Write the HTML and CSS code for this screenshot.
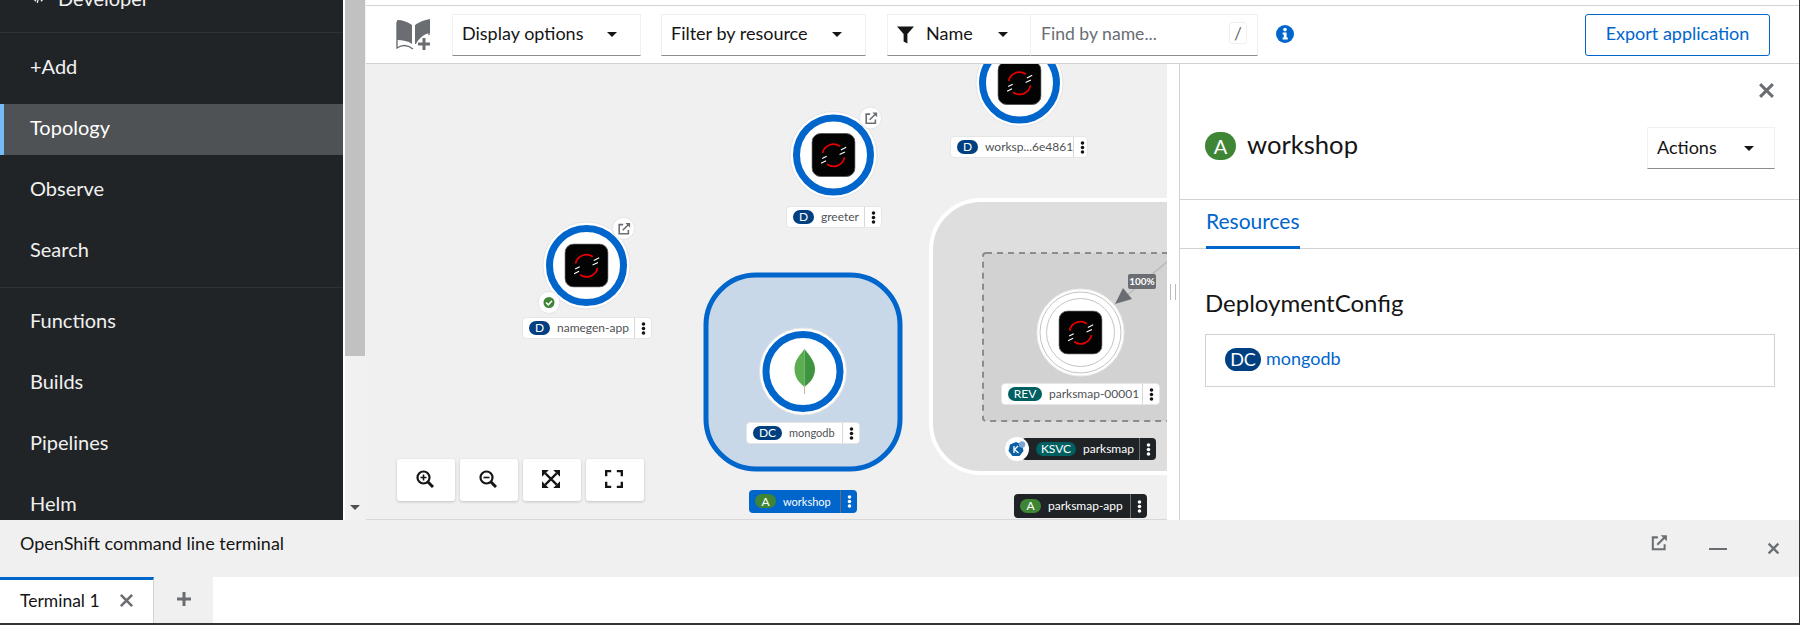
FILE: index.html
```html
<!DOCTYPE html>
<html lang="en">
<head>
    <meta charset="UTF-8">
    <title>Topology</title>
    <link rel="stylesheet" href="styles.css">
</head>
<body>
    <!-- shared icons -->
    <svg class="icon-defs" width="0" height="0">
        <defs>
            <symbol id="shift-logo" viewBox="0 0 45 45">
                <rect x="0.5" y="0.5" width="44" height="44" rx="9" fill="#030303" stroke="#55585b"/>
                <path d="M29 13.5 A11.4 11.4 0 0 0 11.3 20.5" fill="none" stroke="#e60000" stroke-width="1.8"/>
                <path d="M16 32 A11.4 11.4 0 0 0 33.8 25" fill="none" stroke="#e60000" stroke-width="1.8"/>
                <path d="M30 17.4 L35.5 14.6 M28.7 22 L34.2 19.4 M10.9 26 L15.6 23.7 M9.8 31 L14.9 28.4" stroke="#fff" stroke-width="1.1"/>
            </symbol>
            <symbol id="ext-link" viewBox="0 0 16 16">
                <path d="M7 3 H2.5 V13.5 H13 V9" fill="none" stroke="currentColor" stroke-width="1.8"/>
                <path d="M6.5 9.5 L13.5 2.5" stroke="currentColor" stroke-width="1.8"/>
                <path d="M9.5 1 H15 V6.5 Z" fill="currentColor"/>
            </symbol>
            <symbol id="kebab" viewBox="0 0 6 16">
                <circle cx="3" cy="2.5" r="2.2"/>
                <circle cx="3" cy="8" r="2.2"/>
                <circle cx="3" cy="13.5" r="2.2"/>
            </symbol>
            <symbol id="close-x" viewBox="0 0 16 16">
                <path d="M2 2 L14 14 M14 2 L2 14" stroke="currentColor" stroke-width="2.8" fill="none"/>
            </symbol>
        </defs>
    </svg>

    <div class="app">
        <div class="page">
            <nav class="sidebar">
                <div class="perspective">
                    <svg class="perspective-icon" viewBox="0 0 16 12"><path d="M5 2 L1 6 L5 10 M11 2 L15 6 L11 10 M9.5 0 L6.5 12" fill="none" stroke="#f0f0f0" stroke-width="1.6"/></svg>
                    <span>Developer</span>
                </div>
                <div class="nav-group">
                    <a class="nav-item">+Add</a>
                    <a class="nav-item active">Topology</a>
                    <a class="nav-item">Observe</a>
                    <a class="nav-item">Search</a>
                </div>
                <div class="nav-group second">
                    <a class="nav-item">Functions</a>
                    <a class="nav-item">Builds</a>
                    <a class="nav-item">Pipelines</a>
                    <a class="nav-item">Helm</a>
                </div>
            </nav>
            <div class="scroll-track">
                <div class="scroll-thumb"></div>
                <div class="scroll-arrow"></div>
            </div>

            <main class="main">
                <div class="top-strip"></div>
                <div class="toolbar">
                    <svg class="book-icon" viewBox="0 0 36 32">
                        <path d="M1 1 C7 1 12 3 16 6 V25 C12 22 7 21 1 21 Z" fill="#6a6e73"/>
                        <path d="M19 6 C23 3 28 1 34 0 V14 C28 15 23 19 20 25 H19 Z" fill="#6a6e73"/>
                        <path d="M1 3 V29 C7 25 12 26 17 30 M33 2 V16" fill="none" stroke="#6a6e73" stroke-width="1.4"/>
                        <path d="M28 19 V31 M22 25 H34" stroke="#6a6e73" stroke-width="3"/>
                    </svg>
                    <button class="dropdown display-drop"><span>Display options</span><i class="caret"></i></button>
                    <button class="dropdown resource-drop"><span>Filter by resource</span><i class="caret"></i></button>
                    <div class="filter-group">
                        <button class="dropdown name-drop">
                            <svg class="funnel" viewBox="0 0 18 18"><path d="M0 0 H18 L11 8 V18 L7 16 V8 Z" fill="#151515"/></svg>
                            <span class="name-text">Name</span><i class="caret"></i>
                        </button>
                        <div class="find-input">
                            <span>Find by name...</span>
                            <kbd class="slash-hint">/</kbd>
                        </div>
                    </div>
                    <svg class="info-icon" viewBox="0 0 18 18">
                        <circle cx="9" cy="9" r="9" fill="#06c"/>
                        <circle cx="9" cy="4.6" r="1.8" fill="#fff"/>
                        <path d="M6.6 7.4 H10.6 V12.6 H11.8 V14.6 H6.6 V12.6 H7.8 V9.4 H6.6 Z" fill="#fff"/>
                    </svg>
                    <button class="export-btn">Export application</button>
                </div>

                <div class="content">
                    <div class="canvas">
                        <svg class="graph" width="801" height="456" viewBox="366 64 801 456">
                            <!-- groups -->
                            <rect x="706" y="275" width="194" height="194" rx="50" fill="#c9d8e8" stroke="#06c" stroke-width="5"/>
                            <rect x="931" y="200" width="320" height="273" rx="50" fill="#dedede" stroke="#fff" stroke-width="4"/>
                            <rect x="983" y="253" width="250" height="168" rx="3" fill="#d2d2d2" stroke="#8a8d90" stroke-width="2" stroke-dasharray="6 5"/>

                            <!-- traffic edge -->
                            <path d="M1168 261 L1124 298" stroke="#b8bbbe" stroke-width="1.5"/>
                            <path d="M1115 304 L1123 288 L1132 299 Z" fill="#6a6e73"/>

                            <!-- namegen-app -->
                            <circle cx="586.5" cy="265.5" r="43.5" fill="#fff" stroke="#e4e4e4"/>
                            <circle cx="586.5" cy="265.5" r="37" fill="#fff" stroke="#06c" stroke-width="7"/>
                            <use href="#shift-logo" x="564.5" y="243.5" width="44" height="44"/>
                            <circle cx="623.5" cy="228.5" r="11" fill="#fff" stroke="#e4e4e4"/>
                            <use class="deco-icon" href="#ext-link" x="617" y="222" width="14" height="14"/>
                            <circle cx="549" cy="302.5" r="11" fill="#fff" stroke="#e4e4e4"/>
                            <circle cx="549" cy="302.5" r="5.5" fill="#3e8635"/>
                            <path d="M546 302.5 L548.3 304.8 L552 300.8" fill="none" stroke="#fff" stroke-width="1.6"/>

                            <!-- greeter -->
                            <circle cx="833.5" cy="155" r="43.5" fill="#fff" stroke="#e4e4e4"/>
                            <circle cx="833.5" cy="155" r="37" fill="#fff" stroke="#06c" stroke-width="7"/>
                            <use href="#shift-logo" x="811.5" y="133" width="44" height="44"/>
                            <circle cx="870.5" cy="118" r="11" fill="#fff" stroke="#e4e4e4"/>
                            <use class="deco-icon" href="#ext-link" x="864" y="111.5" width="14" height="14"/>

                            <!-- workspace -->
                            <circle cx="1019.5" cy="83" r="43.5" fill="#fff" stroke="#e4e4e4"/>
                            <circle cx="1019.5" cy="83" r="37" fill="#fff" stroke="#06c" stroke-width="7"/>
                            <use href="#shift-logo" x="997.5" y="61" width="44" height="44"/>

                            <!-- mongodb -->
                            <circle cx="803" cy="371.5" r="43.5" fill="#fff" stroke="#e4e4e4"/>
                            <circle cx="803" cy="371.5" r="37" fill="#fff" stroke="#06c" stroke-width="7"/>
                            <path d="M804.5 349 C800 355 794.5 360 794.5 369 C794.5 379 801 384 804.5 387 Z" fill="#5cad4f"/>
                            <path d="M804.5 349 C809 355 815 361 815 369 C815 379 808 384 804.5 387 Z" fill="#3f9440"/>
                            <path d="M804.5 385 V394" stroke="#c5b998" stroke-width="1"/>

                            <!-- parksmap revision -->
                            <circle cx="1080.5" cy="332.5" r="43.5" fill="#fff" stroke="#ededed"/>
                            <circle cx="1080.5" cy="332.5" r="40.5" fill="#fff" stroke="#c4c4c4"/>
                            <circle cx="1080.5" cy="332.5" r="34" fill="#fff" stroke="#c4c4c4"/>
                            <use href="#shift-logo" x="1058.5" y="310.5" width="44" height="44"/>
                        </svg>

                        <span class="traffic-tag">100%</span>

                        <div class="node-label at-namegen">
                            <div class="label-main"><b class="res-badge deploy">D</b><span>namegen-app</span></div>
                            <div class="label-kebab"><svg><use href="#kebab"/></svg></div>
                        </div>
                        <div class="node-label at-greeter">
                            <div class="label-main"><b class="res-badge deploy">D</b><span>greeter</span></div>
                            <div class="label-kebab"><svg><use href="#kebab"/></svg></div>
                        </div>
                        <div class="node-label at-workspace">
                            <div class="label-main"><b class="res-badge deploy">D</b><span>worksp...6e4861</span></div>
                            <div class="label-kebab"><svg><use href="#kebab"/></svg></div>
                        </div>
                        <div class="node-label at-mongodb">
                            <div class="label-main"><b class="res-badge deploy wide">DC</b><span>mongodb</span></div>
                            <div class="label-kebab"><svg><use href="#kebab"/></svg></div>
                        </div>
                        <div class="node-label at-revision">
                            <div class="label-main"><b class="res-badge teal wide">REV</b><span>parksmap-00001</span></div>
                            <div class="label-kebab"><svg><use href="#kebab"/></svg></div>
                        </div>
                        <div class="node-label group-label selected at-workshop">
                            <div class="label-main"><b class="res-badge green">A</b><span>workshop</span></div>
                            <div class="label-kebab"><svg><use href="#kebab"/></svg></div>
                        </div>
                        <div class="node-label group-label dark at-ksvc">
                            <div class="label-main"><b class="res-badge teal wide">KSVC</b><span>parksmap</span></div>
                            <div class="label-kebab"><svg><use href="#kebab"/></svg></div>
                        </div>
                        <div class="node-label group-label dark at-parksapp">
                            <div class="label-main"><b class="res-badge green">A</b><span>parksmap-app</span></div>
                            <div class="label-kebab"><svg><use href="#kebab"/></svg></div>
                        </div>

                        <svg class="knative-deco" viewBox="0 0 24 24">
                            <circle cx="12" cy="12" r="12" fill="#fff"/>
                            <path d="M11 5 L17 7.5 L18.5 14 L14.5 19 L7.5 19 L3.5 14 L5 7.5 Z" fill="#0b5fa5"/>
                            <circle cx="17" cy="7.5" r="3.2" fill="#7aa8d6"/>
                            <path d="M9 9 V16 M13 9 L9.5 12.5 L13.5 16" fill="none" stroke="#fff" stroke-width="1.3"/>
                        </svg>

                        <div class="zoom-controls">
                            <button class="zoom-btn">
                                <svg viewBox="0 0 18 18"><circle cx="7.5" cy="7.5" r="6" fill="none" stroke="#151515" stroke-width="2.2"/><path d="M12 12 L17 17" stroke="#151515" stroke-width="3"/><path d="M7.5 4.5 V10.5 M4.5 7.5 H10.5" stroke="#151515" stroke-width="1.6"/></svg>
                            </button>
                            <button class="zoom-btn">
                                <svg viewBox="0 0 18 18"><circle cx="7.5" cy="7.5" r="6" fill="none" stroke="#151515" stroke-width="2.2"/><path d="M12 12 L17 17" stroke="#151515" stroke-width="3"/><path d="M4.5 7.5 H10.5" stroke="#151515" stroke-width="1.6"/></svg>
                            </button>
                            <button class="zoom-btn">
                                <svg viewBox="0 0 16 16"><path d="M0 0 H6 L0 6 Z M16 0 V6 L10 0 Z M0 16 V10 L6 16 Z M16 16 H10 L16 10 Z" fill="#151515"/><path d="M3 3 L13 13 M13 3 L3 13" stroke="#151515" stroke-width="2"/></svg>
                            </button>
                            <button class="zoom-btn">
                                <svg viewBox="0 0 16 16"><path d="M1 5.5 V1 H5.5 M10.5 1 H15 V5.5 M15 10.5 V15 H10.5 M5.5 15 H1 V10.5" fill="none" stroke="#151515" stroke-width="2.2"/></svg>
                            </button>
                        </div>
                    </div>

                    <div class="splitter"><i></i></div>

                    <aside class="panel">
                        <div class="panel-close"><svg class="close-icon"><use href="#close-x"/></svg></div>
                        <div class="panel-head">
                            <b class="title-badge">A</b>
                            <h2 class="panel-title">workshop</h2>
                            <button class="dropdown actions-drop"><span>Actions</span><i class="caret"></i></button>
                        </div>
                        <div class="panel-tabs">
                            <a class="panel-tab">Resources</a>
                        </div>
                        <div class="panel-body">
                            <h3 class="section-title">DeploymentConfig</h3>
                            <div class="resource-card">
                                <b class="card-badge">DC</b>
                                <a class="resource-link">mongodb</a>
                            </div>
                        </div>
                    </aside>
                </div>
            </main>
        </div>

        <section class="terminal">
            <div class="terminal-head">
                <span class="terminal-title">OpenShift command line terminal</span>
                <div class="terminal-actions">
                    <svg class="term-ext"><use href="#ext-link"/></svg>
                    <i class="term-min"></i>
                    <svg class="term-close"><use href="#close-x"/></svg>
                </div>
            </div>
            <div class="terminal-tabs">
                <div class="term-tab">
                    <span>Terminal 1</span>
                    <svg class="tab-close"><use href="#close-x"/></svg>
                </div>
                <div class="term-add">
                    <svg viewBox="0 0 16 16"><path d="M8 1 V15 M1 8 H15" stroke="#6a6e73" stroke-width="3"/></svg>
                </div>
            </div>
        </section>
    </div>
</body>
</html>
```

FILE: styles.css
```css
* {
    box-sizing: border-box;
}

html, body {
    margin: 0;
    height: 100%;
    overflow: hidden;
}

body {
    font-family: Lato, "Noto Sans", sans-serif;
    font-size: 18px;
    color: #151515;
    background: #fff;
}

button {
    font: inherit;
    color: inherit;
    background: #fff;
}

.icon-defs {
    position: absolute;
}

.app {
    display: flex;
    flex-direction: column;
    height: 625px;
    border-right: 1px solid #333;
    border-bottom: 2px solid #333;
}

.page {
    display: flex;
    height: 520px;
}

/* sidebar */
.sidebar {
    width: 343px;
    flex: none;
    background: #212427;
    color: #f0f0f0;
    font-size: 20px;
    overflow: hidden;
}

/* the perspective switcher is scrolled mostly out of view */
.perspective {
    display: flex;
    align-items: center;
    height: 24px;
    margin-top: -14px;
    margin-bottom: 22px;
    padding-left: 32px;
    gap: 13px;
    white-space: nowrap;
}

.perspective-icon {
    width: 13px;
    height: 10px;
}

.nav-group {
    display: flex;
    flex-direction: column;
    gap: 10px;
    padding: 10px 0;
    border-top: 1px solid #2f3236;
}

.nav-group.second {
    padding-top: 9px;
}

.nav-item {
    display: flex;
    align-items: center;
    flex: none;
    height: 51px;
    padding: 0 0 5px 30px;
}

.nav-item.active {
    background: #4f5255;
    border-left: 4px solid #73bcf7;
    padding-left: 26px;
    color: #fff;
}

.scroll-track {
    width: 23px;
    flex: none;
    background: #f1f1f1;
    border-left: 2px solid #fff;
    display: flex;
    flex-direction: column;
}

.scroll-thumb {
    width: 20px;
    height: 356px;
    background: #c1c1c1;
}

.scroll-arrow {
    margin: auto 0 10px 5px;
    border-left: 5px solid transparent;
    border-right: 5px solid transparent;
    border-top: 5px solid #505050;
    width: 0;
}

/* main area */
.main {
    flex: 1;
    min-width: 0;
    display: flex;
    flex-direction: column;
}

.top-strip {
    height: 6px;
    border-bottom: 1px solid #d2d2d2;
    flex: none;
}

.toolbar {
    display: flex;
    align-items: center;
    height: 58px;
    flex: none;
    padding-left: 30px;
    border-bottom: 1px solid #d2d2d2;
}

.book-icon {
    width: 36px;
    height: 32px;
    margin-right: 20px;
}

.dropdown {
    display: flex;
    align-items: center;
    justify-content: space-between;
    height: 42px;
    padding: 0 23px 0 9px;
    border: 1px solid #f0f0f0;
    border-bottom: 1px solid #8a8d90;
    white-space: nowrap;
}

.dropdown span {
    margin-bottom: 3px;
}

.caret {
    width: 0;
    border-left: 5px solid transparent;
    border-right: 5px solid transparent;
    border-top: 5px solid #151515;
}

.display-drop {
    width: 189px;
}

.resource-drop {
    width: 205px;
    margin-left: 20px;
}

.filter-group {
    display: flex;
    margin-left: 21px;
}

.name-drop {
    width: 144px;
    padding-right: 22px;
}

.funnel {
    width: 17px;
    height: 18px;
}

.dropdown .name-text {
    margin: 0 auto 3px 12px;
}

.find-input {
    display: flex;
    align-items: center;
    justify-content: space-between;
    width: 227px;
    height: 42px;
    padding: 0 10px 3px 10px;
    font-size: 17.6px;
    color: #6a6e73;
    border-top: 1px solid #f0f0f0;
    border-right: 1px solid #f0f0f0;
    border-bottom: 1px solid #8a8d90;
}

.slash-hint {
    display: flex;
    align-items: center;
    justify-content: center;
    width: 18px;
    height: 22px;
    font: inherit;
    border: 1px solid #f0f0f0;
    border-radius: 3px;
}

.info-icon {
    width: 18px;
    height: 18px;
    margin: -2px 0 0 18px;
}

.export-btn {
    width: 185px;
    height: 42px;
    margin-left: auto;
    margin-right: 29px;
    padding-bottom: 4px;
    color: #06c;
    border: 1px solid #06c;
    border-radius: 3px;
}

.content {
    flex: 1;
    min-height: 0;
    display: flex;
}

/* topology canvas */
.canvas {
    position: relative;
    width: 801px;
    flex: none;
    background: #f0f0f0;
    overflow: hidden;
    border-bottom: 1px solid #d8d8d8;
    font-size: 12px;
}

.graph {
    display: block;
}

.deco-icon {
    color: #6a6e73;
}

.traffic-tag {
    position: absolute;
    left: 762px;
    top: 210px;
    width: 28px;
    height: 15px;
    line-height: 15px;
    text-align: center;
    font-size: 10px;
    font-weight: 700;
    color: #fff;
    background: #6a6e73;
    border-radius: 2px;
}

.node-label {
    position: absolute;
    display: flex;
    height: 22px;
    background: #fff;
    color: #4f5255;
    border: 1px solid #e6e6e6;
    border-radius: 4px;
    white-space: nowrap;
}

.label-main {
    flex: 1;
    display: flex;
    align-items: center;
    gap: 7px;
    padding: 0 0 1px 6px;
}

.label-kebab {
    width: 17px;
    flex: none;
    display: flex;
    align-items: center;
    justify-content: center;
    border-left: 1px solid #d8d8d8;
}

.label-kebab svg {
    width: 5px;
    height: 13px;
    fill: #151515;
}

.res-badge {
    display: flex;
    align-items: center;
    justify-content: center;
    flex: none;
    width: 21px;
    height: 14px;
    font-weight: 400;
    color: #fff;
    border-radius: 8px;
}

.res-badge.wide {
    width: 29px;
}

.deploy {
    background: #004080;
}

.teal {
    background: #005f60;
}

.green {
    background: #3e8635;
}

.group-label {
    border: none;
    color: #fff;
}

.group-label .label-kebab {
    border-left-color: #6a6e73;
}

.group-label .label-kebab svg {
    fill: #fff;
}

.selected {
    background: #06c;
}

.dark {
    background: #1f2326;
}

.at-namegen {
    left: 156px;
    top: 253px;
    width: 130px;
}

.at-greeter {
    left: 420px;
    top: 142px;
    width: 96px;
}

.at-workspace {
    left: 584px;
    top: 72px;
    width: 138px;
}

.at-mongodb {
    left: 380px;
    top: 358px;
    width: 114px;
}

.at-mongodb span {
    font-size: 11px;
}

.at-revision {
    left: 635px;
    top: 319px;
    width: 159px;
}

.at-revision .res-badge {
    width: 34px;
}

.at-workshop {
    left: 383px;
    top: 426px;
    width: 108px;
    height: 23px;
}

.at-workshop span {
    font-size: 11px;
}

.at-ksvc {
    left: 656px;
    top: 374px;
    width: 134px;
    padding-left: 8px;
}

.at-ksvc .res-badge {
    width: 40px;
}

.at-parksapp {
    left: 648px;
    top: 430px;
    width: 133px;
    height: 24px;
}

.knative-deco {
    position: absolute;
    left: 639px;
    top: 373px;
    width: 24px;
    height: 24px;
}

.zoom-controls {
    position: absolute;
    left: 31px;
    top: 395px;
    display: flex;
    gap: 5px;
}

.zoom-btn {
    display: flex;
    align-items: center;
    justify-content: center;
    width: 58px;
    height: 42px;
    border: none;
    border-radius: 3px;
    box-shadow: 0 1px 3px rgba(0, 0, 0, 0.2);
}

.zoom-btn svg {
    width: 18px;
    height: 18px;
    margin: -2px 0 0 -2px;
}

.splitter {
    width: 13px;
    flex: none;
    display: flex;
    align-items: center;
    justify-content: center;
    background: #fff;
    border-right: 1px solid #d2d2d2;
}

.splitter i {
    width: 6px;
    height: 16px;
    margin: -1px 0 0 -1px;
    border-left: 1px solid #b8bbbe;
    border-right: 1px solid #b8bbbe;
}

/* side panel */
.panel {
    flex: 1;
    min-width: 0;
    display: flex;
    flex-direction: column;
}

.panel-close {
    display: flex;
    justify-content: flex-end;
    height: 33px;
    padding: 18px 24px 0 0;
}

.close-icon {
    width: 17px;
    height: 17px;
    color: #6a6e73;
}

.panel-head {
    display: flex;
    align-items: center;
    height: 103px;
    padding: 0 24px 0 25px;
    border-bottom: 1px solid #d2d2d2;
}

.title-badge {
    display: flex;
    align-items: center;
    justify-content: center;
    width: 31px;
    height: 28px;
    margin-bottom: 4px;
    font-size: 20px;
    font-weight: 400;
    color: #fff;
    background: #3e8635;
    border-radius: 14px;
}

.panel-title {
    margin: 0 auto 8px 11px;
    font-size: 25.6px;
    font-weight: 400;
}

.actions-drop {
    width: 128px;
    padding-right: 20px;
}

.panel-tabs {
    display: flex;
    height: 49px;
    padding-left: 26px;
    border-bottom: 1px solid #d2d2d2;
}

.panel-tab {
    height: 49px;
    padding-top: 8px;
    font-size: 21px;
    color: #06c;
    border-bottom: 3px solid #06c;
}

.panel-body {
    padding: 39px 24px 0 25px;
}

.section-title {
    margin: 0 0 16px;
    font-size: 24px;
    font-weight: 400;
    line-height: 30px;
}

.resource-card {
    display: flex;
    align-items: center;
    height: 53px;
    padding: 0 0 3px 19px;
    border: 1px solid #d2d2d2;
}

.card-badge {
    display: flex;
    align-items: center;
    justify-content: center;
    width: 36px;
    height: 23px;
    font-weight: 400;
    color: #fff;
    background: #004080;
    border-radius: 12px;
}

.resource-link {
    margin: 0 0 2px 5px;
    color: #06c;
}

/* terminal */
.terminal {
    flex: 1;
    display: flex;
    flex-direction: column;
}

.terminal-head {
    display: flex;
    align-items: center;
    justify-content: space-between;
    height: 57px;
    flex: none;
    padding: 0 19px 11px 20px;
    background: #f0f0f0;
}

.terminal-actions {
    display: flex;
    align-items: center;
}

.term-ext {
    width: 18px;
    height: 18px;
    color: #6a6e73;
}

.term-min {
    width: 18px;
    height: 2px;
    margin: 12px 0 0 41px;
    background: #6a6e73;
}

.term-close {
    width: 13px;
    height: 13px;
    margin: 10px 0 0 40px;
    color: #6a6e73;
}

.terminal-tabs {
    display: flex;
    flex: 1;
}

.term-tab {
    display: flex;
    align-items: center;
    width: 154px;
    padding: 0 0 3px 20px;
    font-size: 17.5px;
    border-top: 3px solid #06c;
    border-right: 1px solid #d2d2d2;
}

.tab-close {
    width: 15px;
    height: 15px;
    margin-left: 19px;
    color: #6a6e73;
}

.term-add {
    display: flex;
    align-items: center;
    justify-content: center;
    width: 59px;
    padding-bottom: 2px;
    background: #f0f0f0;
}

.term-add svg {
    width: 16px;
    height: 16px;
}
```
